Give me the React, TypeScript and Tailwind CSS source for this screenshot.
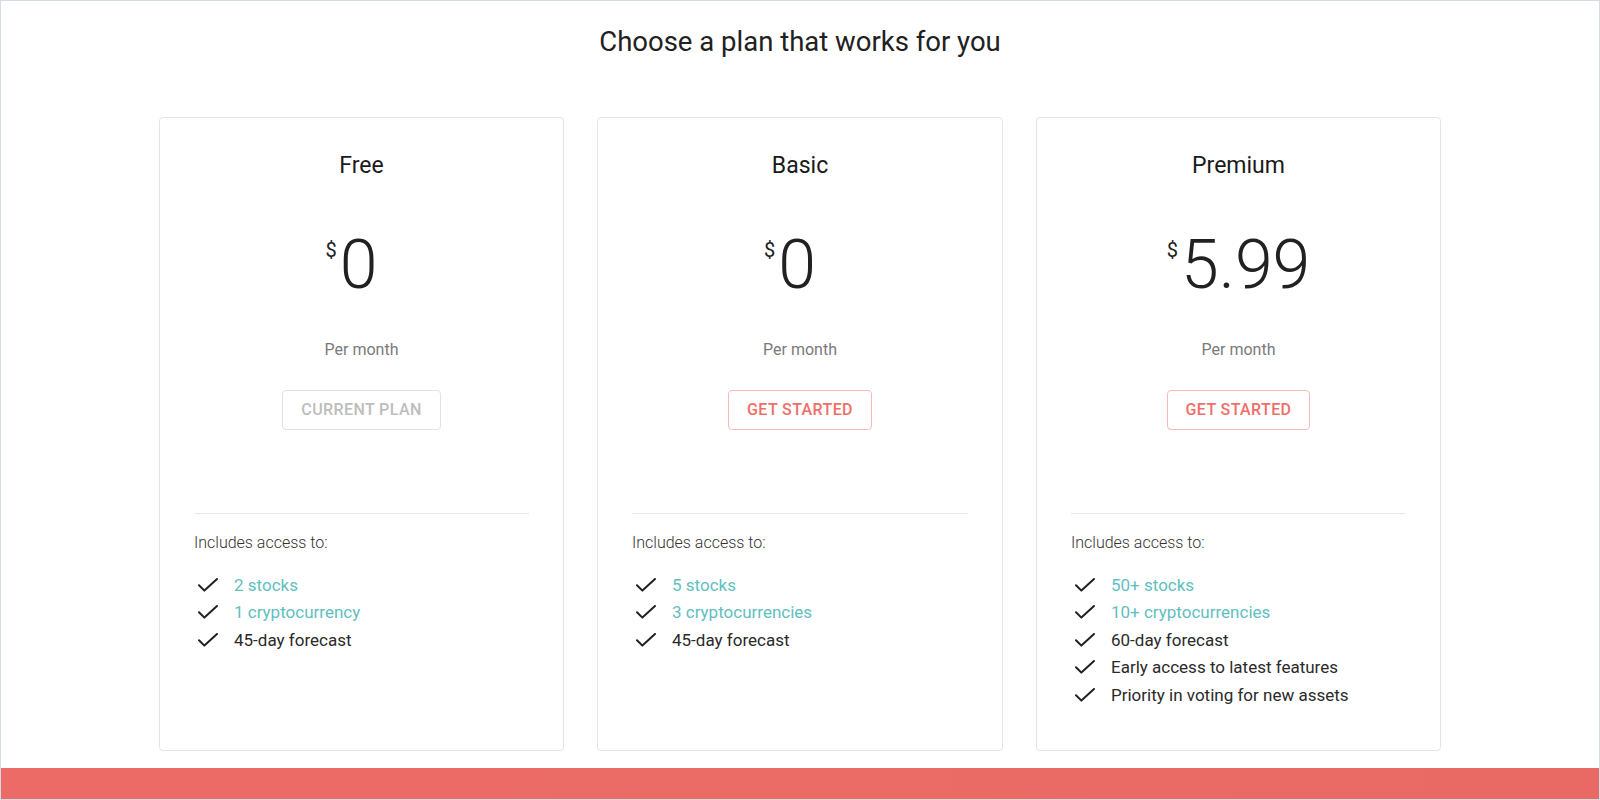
interface Feature {
  text: string;
  highlight?: boolean;
}

interface Plan {
  name: string;
  price: string;
  current: boolean;
  features: Feature[];
}

const plans: Plan[] = [
  {
    name: "Free",
    price: "0",
    current: true,
    features: [
      { text: "2 stocks", highlight: true },
      { text: "1 cryptocurrency", highlight: true },
      { text: "45-day forecast" },
    ],
  },
  {
    name: "Basic",
    price: "0",
    current: false,
    features: [
      { text: "5 stocks", highlight: true },
      { text: "3 cryptocurrencies", highlight: true },
      { text: "45-day forecast" },
    ],
  },
  {
    name: "Premium",
    price: "5.99",
    current: false,
    features: [
      { text: "50+ stocks", highlight: true },
      { text: "10+ cryptocurrencies", highlight: true },
      { text: "60-day forecast" },
      { text: "Early access to latest features" },
      { text: "Priority in voting for new assets" },
    ],
  },
];

function Check() {
  return (
    <svg width="20" height="14" viewBox="0 0 20 14" fill="none">
      <path
        d="M1 7.2L6.4 12.6L19 1"
        stroke="#212121"
        strokeWidth="2"
        strokeLinecap="round"
        strokeLinejoin="round"
      />
    </svg>
  );
}

function PlanCard({ plan }: { plan: Plan }) {
  const whole = !plan.price.includes(".");
  return (
    <div className="flex flex-col items-center rounded-[4px] border border-[#e4e4e4] bg-white px-[34px] pt-[34px]">
      {/* Name */}
      <h2 className="text-[23px] leading-[28px] text-[#1a1a1a]">{plan.name}</h2>

      {/* Price */}
      <div className={`mt-[50px] flex h-[70px] items-start text-[#212121] ${whole ? "mr-[20px]" : ""}`}>
        <span className="mt-[10px] mr-[3px] text-[20px] leading-[20px]">$</span>
        <span className="text-[68px] font-light leading-[70px]">{plan.price}</span>
      </div>

      <p className="mt-[38px] text-[16px] leading-[24px] text-[#7a7a7a]">Per month</p>

      {/* Action */}
      <button
        className={`mt-[28px] h-[40px] rounded-[4px] border px-[18px] text-[16px] font-medium tracking-[0.4px] ${
          plan.current
            ? "border-[#e2e2e2] text-[#bdbdbd]"
            : "border-[#f7bab7] text-[#ee6f6a]"
        }`}
      >
        {plan.current ? "CURRENT PLAN" : "GET STARTED"}
      </button>

      <div className="mt-[83px] h-px w-full bg-[#e6e6e6]" />

      {/* Features */}
      <div className="w-full">
        <p className="mt-[17px] text-[16px] font-light leading-[24px] text-[#333333]">
          Includes access to:
        </p>
        <ul className="mt-[16px]">
          {plan.features.map((f) => (
            <li key={f.text} className="flex h-[27.5px] items-center">
              <span className="ml-[4px] flex w-[20px]">
                <Check />
              </span>
              <span
                className={`ml-[16px] text-[17px] leading-[24px] ${
                  f.highlight ? "text-[#5fc0bf]" : "text-[#2a2a2a]"
                }`}
              >
                {f.text}
              </span>
            </li>
          ))}
        </ul>
      </div>
    </div>
  );
}

export default function App() {
  return (
    <div
      className="flex h-[800px] w-full flex-col border border-[#d4dbe4] bg-white"
      style={{ fontFamily: "Roboto, 'Liberation Sans', sans-serif" }}
    >
      <h1 className="mt-[25px] text-center text-[27.5px] leading-[32px] text-[#212121]">
        Choose a plan that works for you
      </h1>

      <div className="mx-auto mt-[59px] grid h-[634px] grid-cols-[405px_406px_405px] gap-[33px]">
        {plans.map((p) => (
          <PlanCard key={p.name} plan={p} />
        ))}
      </div>

      <div className="mt-auto h-[31px] bg-gradient-to-r from-[#ec6b66] to-[#e96a64]" />
    </div>
  );
}
